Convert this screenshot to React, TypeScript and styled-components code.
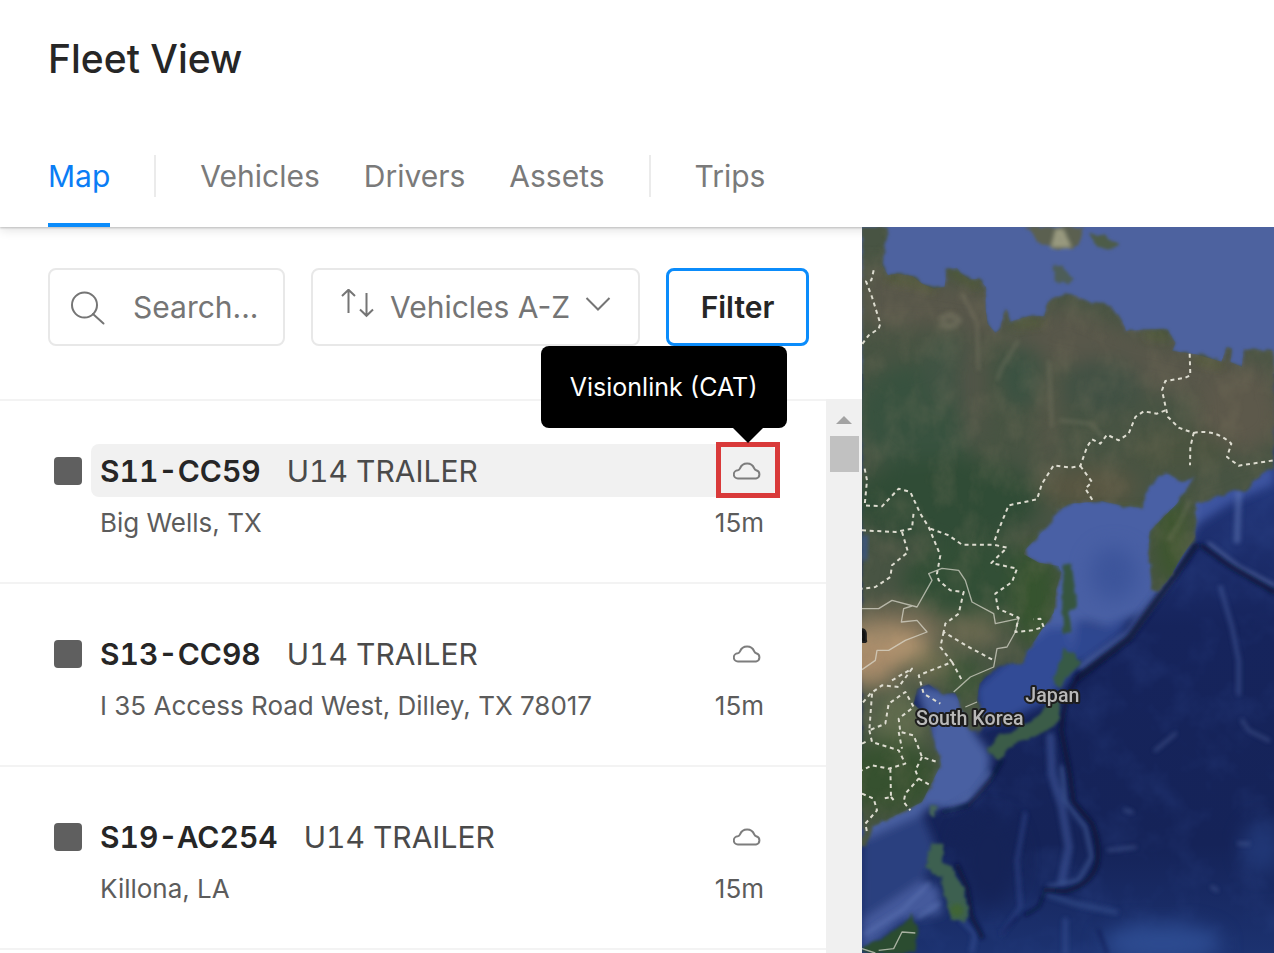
import React from "react";
import styled, { createGlobalStyle, css } from "styled-components";

const GlobalStyle = createGlobalStyle`
  *, *::before, *::after { box-sizing: border-box; }
  body { margin: 0; background: #fff; font-family: Inter, "Liberation Sans", sans-serif; color: #262626; }
  button, input, select { font: inherit; color: inherit; }
`;

const Page = styled.div`
  display: flex;
  flex-direction: column;
  height: 100vh;
  overflow: hidden;
`;

const Header = styled.header`
  position: relative;
  z-index: 1;
  flex: none;
  padding: 35px 48px 0;
  background: #fff;
  box-shadow: 0 1px 2px #bdbdbd, 0 3px 10px rgba(0, 0, 0, 0.12);
`;

const Title = styled.h1`
  margin: 0;
  font-size: 39px;
  line-height: 48px;
  font-weight: 500;
`;

const Tabs = styled.nav`
  display: flex;
  gap: 44px;
  margin-top: 42px;
  height: 102px;
`;

const Tab = styled.a<{ $active?: boolean }>`
  display: block;
  line-height: 102px;
  font-size: 30px;
  text-decoration: none;
  color: ${(p) => (p.$active ? "#0a7df5" : "#7a7a7a")};
  ${(p) => p.$active && css`box-shadow: inset 0 -4px 0 #0b8cfb;`}
`;

const TabDivider = styled.span`
  width: 2px;
  height: 42px;
  align-self: center;
  background: #ebebeb;
`;

const Main = styled.main`
  display: flex;
  flex: 1;
  min-height: 0;
`;

const Sidebar = styled.section`
  display: flex;
  flex-direction: column;
  width: min(862px, 68%);
  background: #fff;
`;

const Toolbar = styled.form`
  display: flex;
  gap: 26px;
  padding: 41px 48px 53px;
`;

const Control = styled.label`
  display: flex;
  align-items: center;
  height: 78px;
  border: 2px solid #e8e8e8;
  border-radius: 8px;
  color: #757575;
  font-size: 30px;
`;

const SearchBox = styled(Control)`
  width: 237px;
  gap: 27px;
  padding-left: 20px;
`;

const SearchInput = styled.input`
  flex: 1;
  min-width: 0;
  padding: 0;
  border: 0;
  outline: 0;
  background: none;
  &::placeholder { color: #757575; opacity: 1; }
`;

const SortBox = styled(Control)`
  width: 329px;
  gap: 14px;
  padding-left: 27px;
`;

const SortSelect = styled.select`
  appearance: none;
  padding: 0;
  border: 0;
  outline: 0;
  background: none;
`;

const FilterButton = styled.button`
  width: 143px;
  height: 78px;
  padding: 0;
  border: 3px solid #0b8cfb;
  border-radius: 8px;
  background: #fff;
  font-size: 30px;
  font-weight: 600;
`;

const ListArea = styled.div`
  display: flex;
  flex: 1;
  min-height: 0;
`;

const List = styled.ul`
  flex: 1;
  margin: 0;
  padding: 0;
  list-style: none;
`;

const Row = styled.li`
  display: flex;
  gap: 9px;
  height: 183px;
  padding: 43px 51px 0 54px;
  border-top: 2px solid #f3f3f3;
`;

const Status = styled.span`
  width: 28px;
  height: 28px;
  margin-top: 13px;
  border-radius: 4px;
  background: #5f5f5f;
`;

const RowBody = styled.div`
  flex: 1;
`;

const NameLine = styled.div<{ $hover?: boolean }>`
  display: flex;
  align-items: center;
  height: 53px;
  padding: 0 14px 0 9px;
  border-radius: 8px;
  font-size: 30px;
  font-variant-numeric: tabular-nums;
  background: ${(p) => (p.$hover ? "#f1f1f1" : "transparent")};
`;

const UnitName = styled.strong`
  font-weight: 600;
`;

const UnitModel = styled.span`
  flex: 1;
  margin-left: 26px;
  color: #4a4a4a;
`;

const DetailLine = styled.div`
  display: flex;
  justify-content: space-between;
  padding: 8px 11px 0 9px;
  font-size: 26px;
  line-height: 36px;
  color: #5c5c5c;
`;

const CloudButton = styled.button`
  position: relative;
  display: flex;
  width: 28px;
  height: 28px;
  padding: 0;
  border: 0;
  background: none;
  color: #7d7d7d;
`;

const Callout = styled.span`
  position: absolute;
  inset: -15px -19px -13px -17px;
  border: 5px solid #d93a3a;
`;

const Tooltip = styled.span`
  position: absolute;
  right: -26px;
  bottom: 57px;
  padding: 0 29px;
  border-radius: 8px;
  background: #000;
  color: #fff;
  font-size: 25px;
  line-height: 82px;
  white-space: nowrap;
  &::after {
    content: "";
    position: absolute;
    top: 100%;
    right: 24px;
    border: 15px solid transparent;
    border-top-color: #000;
    border-bottom: 0;
  }
`;

const Scrollbar = styled.div`
  display: flex;
  flex-direction: column;
  align-items: center;
  gap: 12px;
  width: 36px;
  padding-top: 17px;
  background: #f0f0f0;
`;

const ScrollArrow = styled.span`
  border: 8px solid transparent;
  border-top: 0;
  border-bottom-color: #a3a3a3;
`;

const ScrollThumb = styled.span`
  width: 29px;
  height: 36px;
  background: #c1c1c1;
`;

const MapPane = styled.section`
  position: relative;
  z-index: 2;
  flex: 1;
  min-width: 0;
  background: #16255c;
`;

const MapSvg = styled.svg`
  display: block;
  width: 100%;
  height: 100%;
`;

const CloudIcon = () => (
  <svg width="28" height="28" viewBox="0 0 28 28" fill="none" stroke="currentColor" strokeWidth="2" strokeLinejoin="round" aria-hidden="true">
    <path d="M5 21.500a4 4 0 0 1-.2-8.2Q6.500 13 7 11.300a7.600 7.600 0 0 1 14.200 0Q21.700 12.900 23.200 13.300a4.200 4.200 0 0 1-.2 8.200Z" />
  </svg>
);

const SearchIcon = () => (
  <svg width="36" height="36" viewBox="0 0 36 36" fill="none" stroke="currentColor" strokeWidth="2" strokeLinecap="round" aria-hidden="true">
    <circle cx="14.500" cy="16" r="12.500" />
    <path d="M23 25L33.500 34.500" />
  </svg>
);

const SortIcon = () => (
  <svg width="36" height="36" viewBox="0 0 36 36" fill="none" stroke="currentColor" strokeWidth="2" aria-hidden="true">
    <path d="M8.500 24V1M2 7L8.500 .7L15 7M26.500 4V27M20 20.500L26.500 26.800L33 20.500" />
  </svg>
);

const ChevronIcon = () => (
  <svg width="26" height="26" viewBox="0 0 26 26" fill="none" stroke="currentColor" strokeWidth="2" aria-hidden="true">
    <path d="M1.500 4L13 15.500L24.500 4" />
  </svg>
);

const MAINLAND =
  "M0 0H75L70 60L60 115L78 145L105 140L150 147L180 170L215 185L248 180L254 125L285 122L295 138L322 158L350 155L372 180L370 240L376 290L400 318L415 308L424 262L435 245L442 285L500 268L548 268L556 228L580 208L640 203L695 228L750 235L784 290L792 312L850 308L915 305L940 348L930 372L1000 382L1078 404L1095 360L1110 365L1105 405L1140 420L1145 365L1236 372V725L1200 742L1150 787L1080 800L1020 827L1000 830L1002 880L1000 930L960 987L920 1057L890 1092L870 1085L860 980L862 915L900 875L945 830L985 770L1000 745L960 765L945 755L925 742L885 745L850 795L842 842L790 837L720 822L620 830L590 850L550 905L490 967L485 982L530 1007L590 1017L598 1037L582 1087L575 1157L540 1207L500 1267L480 1310L400 1322L352 1370L345 1420L372 1480L350 1520L322 1508L300 1445L280 1397L240 1400L200 1372L165 1385L155 1430L200 1475L222 1560L238 1610L210 1665L180 1725L100 1765L30 1800L15 1850L0 1858Z";

const BORDERS = [
  "M35 130L28 160L12 163L30 210L55 290L50 305L20 325L0 352",
  "M983 380L985 445L970 452L910 462L900 490L912 545L918 570L950 602L995 618L985 660L984 715",
  "M995 618Q1060 605 1108 650L1095 690L1130 716L1236 700",
  "M910 550L885 560L845 553L820 570L800 620L770 640L735 623L715 650L690 637L675 660L655 717L625 722L575 715L540 770L525 817L440 835L405 920L395 950",
  "M655 717L690 765L670 785L695 825",
  "M8 725L15 760L8 835L60 838L110 785L145 795L175 860L200 900L235 985L225 1040L230 1060L265 1090L305 1095L290 1160L250 1190L245 1215L320 1260L395 1300",
  "M0 910L100 915L150 905L155 855",
  "M205 905L260 925L300 953L395 953L435 962L388 1008L465 1025L450 1065L400 1100L408 1145L470 1172L460 1215L510 1210L545 1200L535 1175L515 1177",
  "M120 915L138 975L90 1015L85 1050L40 1080L0 1085",
  "M245 1215L235 1260L270 1305L170 1345L185 1400L235 1430",
  "M270 1305L300 1360M90 1360L150 1325L110 1380L60 1375L25 1400L0 1430",
  "M30 1400L22 1510L70 1490L80 1430L130 1395L155 1440L110 1475L115 1515L155 1525L180 1590L225 1605",
  "M22 1510L30 1545L110 1570L130 1610L80 1625L30 1615L0 1630",
  "M85 1625L87 1710L60 1715M180 1590L160 1630L170 1655L130 1700L125 1725L145 1750M170 1655L210 1678",
  "M0 1550L20 1540M110 1515L120 1565M0 1700L35 1715L45 1750L10 1790L15 1815M87 1710L100 1725",
];

const FleetMap = () => (
  <MapSvg viewBox="0 0 1236 2178" preserveAspectRatio="xMinYMin slice" role="img" aria-label="Satellite map">
    <defs>
      <filter id="b6" x="-20%" y="-20%" width="140%" height="140%"><feGaussianBlur stdDeviation="6" /></filter>
      <filter id="b14" x="-30%" y="-30%" width="160%" height="160%"><feGaussianBlur stdDeviation="14" /></filter>
      <filter id="b30" x="-50%" y="-50%" width="200%" height="200%" colorInterpolationFilters="sRGB"><feGaussianBlur stdDeviation="30" /></filter>
      <filter id="coast" x="-2%" y="-2%" width="104%" height="104%" colorInterpolationFilters="sRGB">
        <feTurbulence type="fractalNoise" baseFrequency="0.03" numOctaves="3" seed="4" />
        <feDisplacementMap in="SourceGraphic" scale="22" xChannelSelector="R" yChannelSelector="G" />
        <feGaussianBlur stdDeviation="4" />
      </filter>
      <filter id="grain" x="0" y="0" width="100%" height="100%" colorInterpolationFilters="sRGB">
        <feTurbulence type="fractalNoise" baseFrequency="0.014 0.01" numOctaves="5" seed="9" />
        <feColorMatrix values="0 0 0 0 0.5  0 0 0 0 0.47  0 0 0 0 0.38  1.800 0 0 0 -0.700" />
      </filter>
      <filter id="seaGrain" x="0" y="0" width="100%" height="100%" colorInterpolationFilters="sRGB">
        <feTurbulence type="fractalNoise" baseFrequency="0.008" numOctaves="4" seed="21" />
        <feColorMatrix values="0 0 0 0 0.2  0 0 0 0 0.3  0 0 0 0 0.58  1.800 0 0 0 -0.800" />
      </filter>
      <clipPath id="land"><path d={MAINLAND} /></clipPath>
      <linearGradient id="deep" x1="0" y1="0" x2="0" y2="1">
        <stop offset="0.350" stopColor="#22367a" />
        <stop offset="0.550" stopColor="#16245c" />
        <stop offset="0.850" stopColor="#152358" />
        <stop offset="1" stopColor="#1c3270" />
      </linearGradient>
    </defs>

    <rect width="1236" height="2178" fill="url(#deep)" />
    <rect y="700" width="1236" height="1478" filter="url(#seaGrain)" opacity="0.300" />
    <path d="M0 0H1236V440H0Z" fill="#4d629f" />

    <g filter="url(#b14)">
      <path d="M470 930L620 790L1010 680L1060 800L1010 880L930 1060L840 1160L740 1200L660 1180L640 1280L560 1320L480 1340L420 1200Z" fill="#4860a5" />
      <path d="M1000 830L1090 780L1236 700V770L1100 830L1010 890Z" fill="#3d55a0" />
      <path d="M640 1180L720 1200L800 1170L780 1220L670 1310L630 1300Z" fill="#2f4690" />
      <path d="M430 1300L560 1200L620 1200L640 1330L560 1420L440 1480L350 1500L340 1380Z" fill="#334b96" />
      <path d="M160 1370L300 1400L340 1520L385 1580L380 1650L330 1720L260 1750L200 1740L150 1790L0 1860V1780L190 1640L200 1500Z" fill="#4a61a2" />
      <path d="M0 1840L180 1760L230 1880L170 1980L200 2000L80 2100L0 2150Z" fill="#2c417f" />
      <path d="M0 2080L180 1960L230 1980L240 2060L120 2080L0 2178Z" fill="#445a9c" />
    </g>
    <ellipse cx="755" cy="1040" rx="70" ry="80" fill="#3d559b" filter="url(#b30)" />
    <ellipse cx="900" cy="2150" rx="180" ry="60" fill="#2d4b90" filter="url(#b30)" />
    <ellipse cx="1200" cy="1860" rx="60" ry="80" fill="#29458a" opacity="0.600" filter="url(#b30)" />
    <ellipse cx="380" cy="1900" rx="90" ry="140" fill="#152357" filter="url(#b30)" />

    <g fill="none" strokeLinecap="round" filter="url(#b6)">
      <path d="M975 960L900 1085L800 1220L660 1320" stroke="#4a609f" strokeWidth="26" opacity="0.700" />
      <path d="M1040 950L1130 1020L1236 1075" stroke="#6679b0" strokeWidth="12" opacity="0.600" />
      <path d="M1130 800L1125 940" stroke="#6077b5" strokeWidth="20" opacity="0.500" />
      <path d="M1075 1080L1110 1200L1130 1300L1130 1400" stroke="#4e66a5" strokeWidth="12" opacity="0.500" />
      <path d="M565 1530L570 1640L600 1740L620 1860L600 1960" stroke="#3a5494" strokeWidth="26" opacity="0.600" />
      <path d="M600 1620L610 1720L670 1800L690 1890L650 1960L560 1980" stroke="#455d99" strokeWidth="14" opacity="0.600" />
      <path d="M490 1760L465 1900L475 2040L420 2120" stroke="#314a8d" strokeWidth="12" opacity="0.600" />
      <path d="M550 2000L640 2030L760 2055" stroke="#3a5492" strokeWidth="18" opacity="0.500" />
      <path d="M10 2120L120 2050L200 1970M170 2070L230 2030" stroke="#5e75b4" strokeWidth="10" opacity="0.600" />
      <path d="M270 1740L340 1700L385 1640" stroke="#5a70b0" strokeWidth="16" opacity="0.500" />
      <path d="M880 1570L940 1520M1140 1480L1160 1510L1220 1540M1130 1850L1160 1850M1050 1980L1065 1990M740 1870L820 1860M790 1750L810 1755" stroke="#51669d" strokeWidth="10" opacity="0.500" />
      <path d="M300 2080L340 2120L330 2170M610 2080L610 2178" stroke="#3a5499" strokeWidth="16" opacity="0.500" />
    </g>
    <g fill="none" stroke="#0a1236" strokeLinecap="round" strokeLinejoin="round" opacity="0.850" filter="url(#b6)">
      <path d="M1000 957L935 1050L800 1235L645 1355" strokeWidth="20" />
      <path d="M1020 957L1100 1015L1236 1095" strokeWidth="14" />
      <path d="M645 1355Q600 1430 598 1510L625 1650L635 1725L690 1790Q715 1850 705 1910Q690 1970 610 1993L550 1988" strokeWidth="13" />
      <path d="M550 1990L530 2040L490 2064" strokeWidth="8" />
      <path d="M420 1600L385 1660L320 1735L240 1755" strokeWidth="10" />
      <path d="M285 1915L315 1980L330 2070L360 2130" strokeWidth="12" />
      <path d="M465 2070L420 2120M710 2110L735 2178" strokeWidth="7" opacity="0.600" />
    </g>

    <g filter="url(#coast)">
      <path d={MAINLAND} fill="#485443" />
      <path d="M605 1007L628 1010L640 1090L642 1140L622 1155L628 1210L605 1225L600 1157Z" fill="#36553f" />
      <path d="M604 1262L630 1277L660 1307L635 1332L605 1357L600 1380L575 1355L592 1320Z" fill="#375a46" />
      <path d="M596 1400L590 1480L560 1510L505 1532L440 1562L408 1600L374 1565L400 1535L450 1510L520 1475L555 1435Z" fill="#3b5c48" />
      <path d="M205 1850H245L240 1905L272 1920L300 1978L322 2040L310 2085L270 2075L245 2010L232 1950L190 1920Z" fill="#3d6050" />
      <path d="M205 1730L228 1738L218 1775L202 1760Z" fill="#45655a" />
      <path d="M0 2178V2165L60 2135L110 2098L150 2062L168 2100L160 2178Z" fill="#2b4c30" />
      <path d="M490 0H665L655 40L635 65H575L540 55Z" fill="#5b6050" />
      <path d="M680 20L720 25L770 48L745 70L705 58Z" fill="#4d5c48" />
      <path d="M575 115L600 120L635 155L620 172L575 160Z" fill="#4d5d58" />
    </g>
    <path d="M580 5L605 5L630 62H565Z" fill="#a7a78a" opacity="0.800" filter="url(#b6)" />

    <g clipPath="url(#land)">
      <g filter="url(#b30)">
        <path d="M0 120L380 180L420 330L600 230L800 310L940 350L1236 420V560L900 500L620 420L300 310L0 300Z" fill="#58574a" />
        <ellipse cx="170" cy="570" rx="190" ry="160" fill="#38523f" />
        <ellipse cx="250" cy="430" rx="70" ry="110" fill="#415444" />
        <ellipse cx="480" cy="450" rx="60" ry="90" fill="#3a5242" />
        <ellipse cx="720" cy="480" rx="120" ry="80" fill="#415144" />
        <ellipse cx="330" cy="470" rx="30" ry="190" fill="#555549" />
        <ellipse cx="560" cy="560" rx="35" ry="180" fill="#555748" />
        <ellipse cx="1130" cy="560" rx="130" ry="120" fill="#5d594b" />
        <ellipse cx="950" cy="670" rx="150" ry="60" fill="#4b5440" />
        <ellipse cx="250" cy="820" rx="280" ry="130" fill="#304c36" />
        <ellipse cx="680" cy="780" rx="150" ry="60" fill="#585642" />
        <ellipse cx="350" cy="1060" rx="230" ry="120" fill="#324f36" />
        <ellipse cx="520" cy="1110" rx="70" ry="150" fill="#36542f" />
        <ellipse cx="100" cy="1190" rx="150" ry="60" fill="#736a54" />
        <ellipse cx="60" cy="1260" rx="150" ry="65" fill="#b0936f" />
        <ellipse cx="20" cy="1310" rx="90" ry="70" fill="#ab8d6b" />
        <ellipse cx="330" cy="1210" rx="90" ry="50" fill="#6a6950" />
        <ellipse cx="230" cy="1320" rx="90" ry="45" fill="#6b6c4e" />
        <ellipse cx="310" cy="1360" rx="60" ry="70" fill="#3b5537" />
        <ellipse cx="110" cy="1490" rx="80" ry="100" fill="#5f6b4d" />
        <ellipse cx="80" cy="1650" rx="150" ry="110" fill="#36512f" />
        <ellipse cx="930" cy="940" rx="50" ry="140" fill="#3d562e" />
      </g>
      <g filter="url(#b6)" fill="none" stroke="#8d8a73" opacity="0.350">
        <path d="M235 280Q265 250 290 280Q270 310 235 290" strokeWidth="20" />
        <path d="M300 200L345 290L350 430M470 340L420 420L405 460M560 400L565 500L570 600M590 580L690 590L720 630" strokeWidth="9" />
        <path d="M985 820L950 890L920 940" strokeWidth="9" />
      </g>
      <path d="M70 150L180 170L215 190M270 130L350 180M450 290L540 285M850 320L920 330M1000 395L1080 415M560 920L500 970M600 850L840 850" fill="none" stroke="#52602e" strokeWidth="20" opacity="0.600" filter="url(#b14)" />
      <rect width="1236" height="1900" filter="url(#grain)" opacity="0.280" />
    </g>
    <ellipse cx="285" cy="2050" rx="20" ry="20" fill="#3f6535" filter="url(#b6)" />
    <path d="M0 925L18 925L15 1000H0Z" fill="#3b557f" filter="url(#b6)" />

    <g fill="none" stroke="#dddcd0" strokeLinejoin="round">
      {BORDERS.map((d) => (
        <path key={d} d={d} strokeWidth="6" strokeDasharray="12 11" />
      ))}
      <path
        d="M0 1145H50L90 1120L165 1140L210 1060L200 1040L240 1024L290 1030L310 1060L330 1125L395 1160L400 1190L470 1175L460 1215L435 1260L405 1265L395 1320L325 1350L275 1395M150 1137L125 1145L118 1185L165 1180L195 1215L130 1240L80 1270L45 1270L40 1300L0 1328M0 2165L40 2178M50 2170L95 2165L120 2115L160 2118M310 1440L345 1425"
        strokeWidth="4"
        opacity="0.700"
      />
    </g>

    <g fontFamily="Roboto, sans-serif" fontSize="59" fontWeight="500" fill="#b9b9b9" stroke="#1d1d1d" strokeWidth="12" strokeLinejoin="round" paintOrder="stroke">
      <text x="490" y="1426">Japan</text>
      <text x="162" y="1495">South Korea</text>
      <text x="12" y="1242" textAnchor="end" fill="#101010">a</text>
    </g>
  </MapSvg>
);

const vehicles = [
  { name: "S11-CC59", model: "U14 TRAILER", place: "Big Wells, TX", age: "15m", active: true },
  { name: "S13-CC98", model: "U14 TRAILER", place: "I 35 Access Road West, Dilley, TX 78017", age: "15m" },
  { name: "S19-AC254", model: "U14 TRAILER", place: "Killona, LA", age: "15m" },
];

export default function App() {
  return (
    <Page>
      <GlobalStyle />
      <Header>
        <Title>Fleet View</Title>
        <Tabs>
          <Tab href="#map" $active>Map</Tab>
          <TabDivider />
          <Tab href="#vehicles">Vehicles</Tab>
          <Tab href="#drivers">Drivers</Tab>
          <Tab href="#assets">Assets</Tab>
          <TabDivider />
          <Tab href="#trips">Trips</Tab>
        </Tabs>
      </Header>
      <Main>
        <Sidebar>
          <Toolbar>
            <SearchBox>
              <SearchIcon />
              <SearchInput type="text" placeholder="Search..." aria-label="Search" />
            </SearchBox>
            <SortBox>
              <SortIcon />
              <SortSelect aria-label="Sort order">
                <option>Vehicles A-Z</option>
              </SortSelect>
              <ChevronIcon />
            </SortBox>
            <FilterButton type="button">Filter</FilterButton>
          </Toolbar>
          <ListArea>
            <List>
              {vehicles.map((v) => (
                <Row key={v.name}>
                  <Status />
                  <RowBody>
                    <NameLine $hover={v.active}>
                      <UnitName>{v.name}</UnitName>
                      <UnitModel>{v.model}</UnitModel>
                      <CloudButton type="button" aria-label="Data source">
                        <CloudIcon />
                        {v.active && (
                          <>
                            <Callout />
                            <Tooltip role="tooltip">Visionlink (CAT)</Tooltip>
                          </>
                        )}
                      </CloudButton>
                    </NameLine>
                    <DetailLine>
                      <span>{v.place}</span>
                      <span>{v.age}</span>
                    </DetailLine>
                  </RowBody>
                </Row>
              ))}
              <Row aria-hidden="true" />
            </List>
            <Scrollbar>
              <ScrollArrow />
              <ScrollThumb />
            </Scrollbar>
          </ListArea>
        </Sidebar>
        <MapPane>
          <FleetMap />
        </MapPane>
      </Main>
    </Page>
  );
}
